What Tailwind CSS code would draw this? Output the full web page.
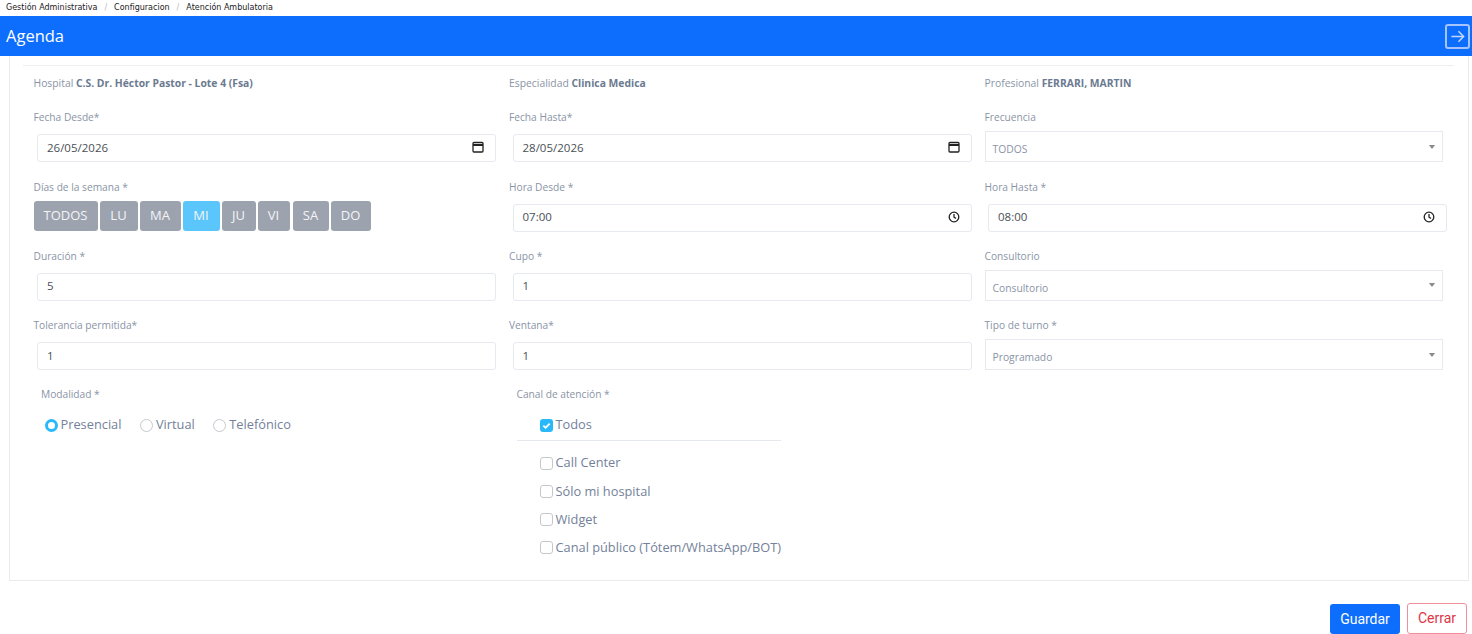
<!DOCTYPE html>
<html lang="es">
<head>
<meta charset="utf-8">
<title>Agenda</title>
<script src="https://cdn.jsdelivr.net/npm/@tailwindcss/browser@4"></script>
</head>
<body class="bg-white font-['Open_Sans',sans-serif] text-[#8a94a6] overflow-hidden">
<div class="w-[1472px] h-[634px] flex flex-col overflow-hidden">
  <nav class="h-[16px] flex items-center pl-[6px] text-[8px] text-[#222] font-['DejaVu_Sans',sans-serif] shrink-0">
    <span>Gestión Administrativa</span><span class="mx-[7px] text-[#bbb]">/</span><span>Configuracion</span><span class="mx-[7px] text-[#bbb]">/</span><span>Atención Ambulatoria</span>
  </nav>
  <header class="h-[40px] bg-[#0d6efd] flex items-center justify-between pl-[6px] pr-[2px] shrink-0">
    <h1 class="text-[16.5px] text-white leading-none">Agenda</h1>
    <div class="w-[25px] h-[25px] border-2 border-[#a5c3ff] rounded-[3px] flex items-center justify-center">
      <svg width="15" height="15" viewBox="0 0 16 16" fill="none" stroke="#c3d7ff" stroke-width="1.6"><path d="M1.5 8h13M9 2.5 14.5 8 9 13.5"/></svg>
    </div>
  </header>
  <main class="mx-[9px] w-[1460px] h-[525px] border border-t-0 border-[#e9ecef] shrink-0 pl-[13px] pt-[9px]">
    <div class="w-[1431px] h-[1px] bg-[#eceef1]"></div>
    <div class="grid grid-cols-[repeat(3,475.5px)] h-[42.2px] pt-[10px] text-[10.35px] leading-[14px]">
      <div class="pl-[10.5px]">Hospital <b class="font-bold text-[#6b7a90]">C.S. Dr. Héctor Pastor - Lote 4 (Fsa)</b></div>
      <div class="pl-[10.5px]">Especialidad <b class="font-bold text-[#6b7a90]">Clinica Medica</b></div>
      <div class="pl-[10.5px]">Profesional <b class="font-bold text-[#6b7a90]">FERRARI, MARTIN</b></div>
    </div>
    <div class="grid grid-cols-[repeat(3,475.5px)] auto-rows-[69.33px] text-[10.2px]">
      <!-- Row 1 -->
      <div class="pl-[10.5px]">
        <label class="block h-[26px] pt-[2px] leading-[14px]">Fecha Desde*</label>
        <div class="ml-[3.5px] w-[459px] h-[28px] border border-[#e6e9ed] rounded-[3px] flex items-center justify-between pl-[9px] pr-[11px] pb-[2px] text-[11.5px] text-[#4a4f55]">26/05/2026
          <svg width="12" height="12" viewBox="0 0 12 12" fill="none" stroke="#222" stroke-width="1.3"><rect x="1" y="1.5" width="10" height="9.5" rx="1"/><path d="M1 4h10" stroke-width="2"/></svg>
        </div>
      </div>
      <div class="pl-[10.5px]">
        <label class="block h-[26px] pt-[2px] leading-[14px]">Fecha Hasta*</label>
        <div class="ml-[3.5px] w-[459px] h-[28px] border border-[#e6e9ed] rounded-[3px] flex items-center justify-between pl-[9px] pr-[11px] pb-[2px] text-[11.5px] text-[#4a4f55]">28/05/2026
          <svg width="12" height="12" viewBox="0 0 12 12" fill="none" stroke="#222" stroke-width="1.3"><rect x="1" y="1.5" width="10" height="9.5" rx="1"/><path d="M1 4h10" stroke-width="2"/></svg>
        </div>
      </div>
      <div class="pl-[10.5px]">
        <label class="block h-[23px] pt-[2px] leading-[14px]">Frecuencia</label>
        <div class="w-[458.5px] h-[31px] border border-[#e6e9ed] flex items-center justify-between pl-[7px] pr-[7px] pt-[7px] text-[10.3px] text-[#8a94a6]">TODOS
          <span class="w-0 h-0 border-x-[3.5px] border-x-transparent border-t-[4px] border-t-[#888] mb-[7px]"></span>
        </div>
      </div>
      <!-- Row 2 -->
      <div class="pl-[10.5px]">
        <label class="block h-[26px] pt-[2px] leading-[14px]">Días de la semana *</label>
        <div class="flex -mt-[3px] text-[13px] text-[#f3f4f6]">
          <span class="w-[64px] h-[30px] mr-[2px] bg-[#9ca3af] rounded-[3px] flex items-center justify-center">TODOS</span>
          <span class="w-[38px] h-[30px] mr-[2px] bg-[#9ca3af] rounded-[3px] flex items-center justify-center">LU</span>
          <span class="w-[41px] h-[30px] mr-[2px] bg-[#9ca3af] rounded-[3px] flex items-center justify-center">MA</span>
          <span class="w-[37px] h-[30px] mr-[2px] bg-[#5bc6fb] rounded-[3px] flex items-center justify-center">MI</span>
          <span class="w-[34px] h-[30px] mr-[2px] bg-[#9ca3af] rounded-[3px] flex items-center justify-center">JU</span>
          <span class="w-[32px] h-[30px] mr-[3px] bg-[#9ca3af] rounded-[3px] flex items-center justify-center">VI</span>
          <span class="w-[36px] h-[30px] mr-[2px] bg-[#9ca3af] rounded-[3px] flex items-center justify-center">SA</span>
          <span class="w-[40px] h-[30px] bg-[#9ca3af] rounded-[3px] flex items-center justify-center">DO</span>
        </div>
      </div>
      <div class="pl-[10.5px]">
        <label class="block h-[26px] pt-[2px] leading-[14px]">Hora Desde *</label>
        <div class="ml-[3.5px] w-[459px] h-[28px] border border-[#e6e9ed] rounded-[3px] flex items-center justify-between pl-[9px] pr-[11px] pb-[2px] text-[11.5px] text-[#4a4f55]">07:00
          <svg width="12" height="12" viewBox="0 0 12 12" fill="none" stroke="#222" stroke-width="1.3"><circle cx="6" cy="6" r="4.8"/><path d="M6 3v3.2l2 1.2"/></svg>
        </div>
      </div>
      <div class="pl-[10.5px]">
        <label class="block h-[26px] pt-[2px] leading-[14px]">Hora Hasta *</label>
        <div class="ml-[3.5px] w-[459px] h-[28px] border border-[#e6e9ed] rounded-[3px] flex items-center justify-between pl-[9px] pr-[11px] pb-[2px] text-[11.5px] text-[#4a4f55]">08:00
          <svg width="12" height="12" viewBox="0 0 12 12" fill="none" stroke="#222" stroke-width="1.3"><circle cx="6" cy="6" r="4.8"/><path d="M6 3v3.2l2 1.2"/></svg>
        </div>
      </div>
      <!-- Row 3 -->
      <div class="pl-[10.5px]">
        <label class="block h-[26px] pt-[2px] leading-[14px]">Duración *</label>
        <div class="ml-[3.5px] w-[459px] h-[28px] border border-[#e6e9ed] rounded-[3px] flex items-center pl-[9px] pb-[2px] text-[11.5px] text-[#4a4f55]">5</div>
      </div>
      <div class="pl-[10.5px]">
        <label class="block h-[26px] pt-[2px] leading-[14px]">Cupo *</label>
        <div class="ml-[3.5px] w-[459px] h-[28px] border border-[#e6e9ed] rounded-[3px] flex items-center pl-[9px] pb-[2px] text-[11.5px] text-[#4a4f55]">1</div>
      </div>
      <div class="pl-[10.5px]">
        <label class="block h-[23px] pt-[2px] leading-[14px]">Consultorio</label>
        <div class="w-[458.5px] h-[31px] border border-[#e6e9ed] flex items-center justify-between pl-[7px] pr-[7px] pt-[7px] text-[10.3px] text-[#8a94a6]">Consultorio
          <span class="w-0 h-0 border-x-[3.5px] border-x-transparent border-t-[4px] border-t-[#888] mb-[7px]"></span>
        </div>
      </div>
      <!-- Row 4 -->
      <div class="pl-[10.5px]">
        <label class="block h-[26px] pt-[2px] leading-[14px]">Tolerancia permitida*</label>
        <div class="ml-[3.5px] w-[459px] h-[28px] border border-[#e6e9ed] rounded-[3px] flex items-center pl-[9px] pb-[2px] text-[11.5px] text-[#4a4f55]">1</div>
      </div>
      <div class="pl-[10.5px]">
        <label class="block h-[26px] pt-[2px] leading-[14px]">Ventana*</label>
        <div class="ml-[3.5px] w-[459px] h-[28px] border border-[#e6e9ed] rounded-[3px] flex items-center pl-[9px] pb-[2px] text-[11.5px] text-[#4a4f55]">1</div>
      </div>
      <div class="pl-[10.5px]">
        <label class="block h-[23px] pt-[2px] leading-[14px]">Tipo de turno *</label>
        <div class="w-[458.5px] h-[31px] border border-[#e6e9ed] flex items-center justify-between pl-[7px] pr-[7px] pt-[7px] text-[10.3px] text-[#8a94a6]">Programado
          <span class="w-0 h-0 border-x-[3.5px] border-x-transparent border-t-[4px] border-t-[#888] mb-[7px]"></span>
        </div>
      </div>
    </div>
    <!-- Row 5 -->
    <div class="grid grid-cols-[repeat(3,475.5px)] text-[10.2px]">
      <div class="pl-[18px]">
        <label class="block h-[24px] pt-[1px] leading-[14px]">Modalidad *</label>
        <div class="flex items-center h-[20px] pl-[3.5px] mt-[5.5px] text-[12.8px] text-[#74819a]">
          <span class="w-[13px] h-[13px] shrink-0 rounded-full border-[3.5px] border-[#29b9fb] bg-white mr-[3px]"></span><span class="mr-[18.5px]">Presencial</span>
          <span class="w-[13px] h-[13px] shrink-0 rounded-full border border-[#c4c8cd] mr-[3px]"></span><span class="mr-[18.5px]">Virtual</span>
          <span class="w-[13px] h-[13px] shrink-0 rounded-full border border-[#c4c8cd] mr-[3px]"></span><span>Telefónico</span>
        </div>
      </div>
      <div class="pl-[18px] col-span-2">
        <label class="block h-[24px] pt-[1px] leading-[14px]">Canal de atención *</label>
        <div class="w-[264px] text-[12.8px] text-[#74819a]">
          <div class="flex items-center h-[20px] pl-[23px] mt-[5.5px]">
            <span class="w-[13px] h-[13px] shrink-0 rounded-[3px] bg-[#29b9fb] mr-[3px] flex items-center justify-center">
              <svg width="9" height="9" viewBox="0 0 10 10" fill="none" stroke="#fff" stroke-width="2"><path d="M1.5 5.2 4 7.6 8.5 2.8"/></svg>
            </span>Todos
          </div>
          <div class="h-[1px] bg-[#e4e7eb] mt-[5px] mb-[12px]"></div>
          <div class="flex items-center h-[20px] pl-[23px] mb-[8.2px]"><span class="w-[13px] h-[13px] shrink-0 rounded-[3px] border border-[#c4c8cd] mr-[3px]"></span>Call Center</div>
          <div class="flex items-center h-[20px] pl-[23px] mb-[8.2px]"><span class="w-[13px] h-[13px] shrink-0 rounded-[3px] border border-[#c4c8cd] mr-[3px]"></span>Sólo mi hospital</div>
          <div class="flex items-center h-[20px] pl-[23px] mb-[8.2px]"><span class="w-[13px] h-[13px] shrink-0 rounded-[3px] border border-[#c4c8cd] mr-[3px]"></span>Widget</div>
          <div class="flex items-center h-[20px] pl-[23px] whitespace-nowrap"><span class="w-[13px] h-[13px] shrink-0 rounded-[3px] border border-[#c4c8cd] mr-[3px]"></span>Canal público (Tótem/WhatsApp/BOT)</div>
        </div>
      </div>
    </div>
  </main>
  <footer class="flex items-start justify-end pr-[5px] pt-[23px] gap-[7px] text-[14px] font-['Roboto',sans-serif]">
    <button class="w-[70px] h-[30px] bg-[#0d6efd] text-white rounded-[3px]">Guardar</button>
    <button class="w-[60px] h-[31px] -mt-[1px] border border-[#ef8f99] text-[#dc3545] rounded-[3px]">Cerrar</button>
  </footer>
</div>
</body>
</html>
